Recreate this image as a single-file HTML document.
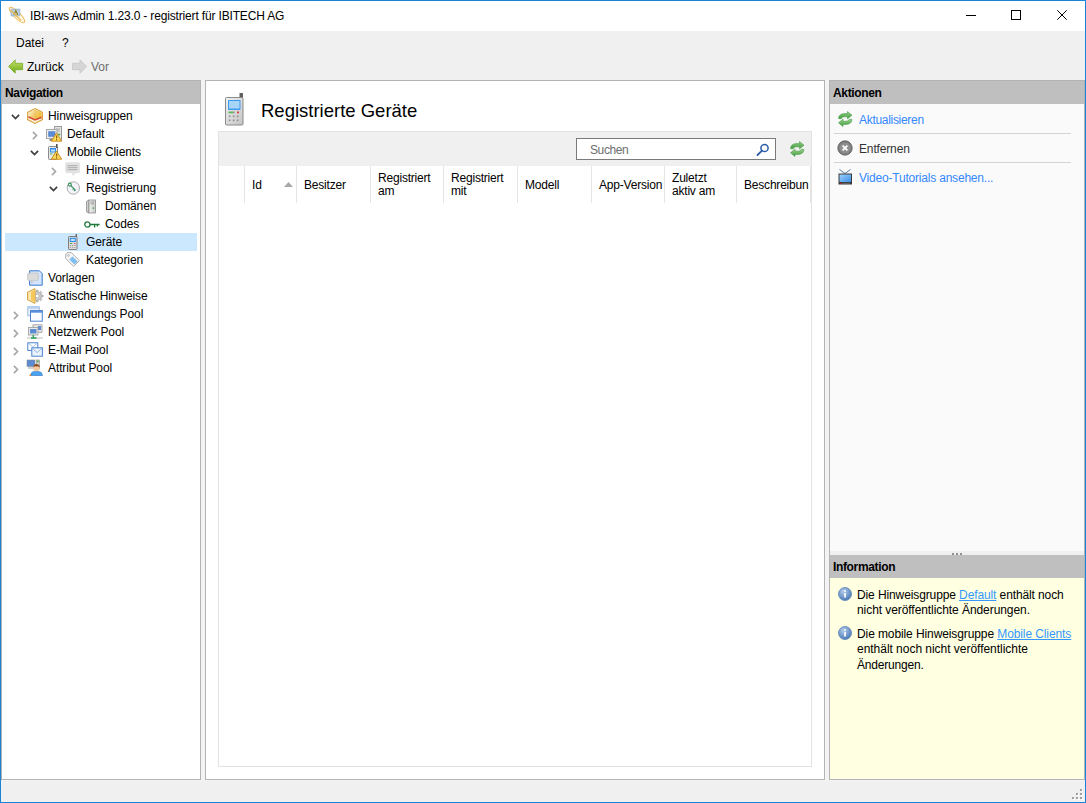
<!DOCTYPE html>
<html><head><meta charset="utf-8">
<style>
*{margin:0;padding:0;box-sizing:border-box}
html,body{width:1086px;height:803px;overflow:hidden;background:#f0f0f0;font-family:"Liberation Sans",sans-serif;font-size:12px;color:#000}
.a{position:absolute;overflow:visible}
.t{position:absolute;white-space:nowrap;line-height:14px}
.i{letter-spacing:-0.12px}
.b{font-weight:bold}
.lnk{color:#3399ff}
</style></head><body>
<div class="a" style="left:0;top:0;width:1086px;height:803px;border:1px solid #1883d7;background:#f0f0f0"></div>
<div class="a" style="left:1px;top:1px;width:1084px;height:30px;background:#fff"></div>
<div class="a" style="left:201px;top:80px;width:4px;height:701px;background:#f3f3f3"></div><div class="a" style="left:825px;top:80px;width:4px;height:701px;background:#f3f3f3"></div><div class="a" style="left:1px;top:780px;width:1084px;height:1px;background:#f4f4f4"></div>
<svg class="a" style="left:7px;top:5px" width="20" height="20" viewBox="0 0 20 20"><ellipse cx="10" cy="10" rx="10.5" ry="3.2" transform="rotate(45 10 10)" fill="#fff8e4" stroke="#efbc5c" stroke-width="1"/><rect x="4" y="4" width="9" height="7" fill="#b4cbe2" stroke="#8aa6c4" stroke-width="0.5"/><path d="M7 10 L8.8 5.5 L10.6 10" fill="none" stroke="#9a8418" stroke-width="1.2"/><path d="M3.5 5 L14 15.5" stroke="#efbc5c" stroke-width="1.2"/></svg>
<div class="t" style="left:30px;top:9px;letter-spacing:-0.16px">IBI-aws Admin 1.23.0 - registriert für IBITECH AG</div>
<div class="a" style="left:966px;top:15px;width:10px;height:1px;background:#000"></div>
<div class="a" style="left:1011px;top:10px;width:10px;height:10px;border:1px solid #000"></div>
<svg class="a" style="left:1057px;top:10px" width="10" height="10" viewBox="0 0 10 10"><path d="M0.3 0.3 L9.7 9.7 M9.7 0.3 L0.3 9.7" stroke="#000" stroke-width="1"/></svg>

<div class="t" style="left:16px;top:36px;">Datei</div>
<div class="t" style="left:62px;top:36px;">?</div>
<svg class="a" style="left:8px;top:59px" width="16" height="15" viewBox="0 0 16 15"><defs><linearGradient id="ga" x1="0" y1="0" x2="0" y2="1"><stop offset="0" stop-color="#c8e46a"/><stop offset="1" stop-color="#6aa812"/></linearGradient></defs><path d="M0.6 7.5 L7.2 0.8 L7.2 4.3 L14.6 4.3 L14.6 10.7 L7.2 10.7 L7.2 14.2 Z" fill="url(#ga)" stroke="#7aaa28" stroke-width="0.8"/></svg>
<div class="t" style="left:27px;top:60px;">Zurück</div>
<svg class="a" style="left:72px;top:59px" width="16" height="15" viewBox="0 0 16 15"><path d="M14.6 7.5 L8 0.8 L8 4.3 L0.6 4.3 L0.6 10.7 L8 10.7 L8 14.2 Z" fill="#d6d6d6" stroke="#c4c4c4" stroke-width="0.8"/></svg>
<div class="t" style="left:91px;top:60px;color:#6d6d6d">Vor</div>

<!-- NAV -->
<div class="a" style="left:1px;top:80px;width:200px;height:700px;background:#fff;border:1px solid #b3b3b3"></div>
<div class="a" style="left:1px;top:80px;width:200px;height:24px;background:#bfbfbf;border:1px solid #b3b3b3;border-bottom:none"></div>
<div class="t" style="left:5px;top:86px;font-weight:bold;letter-spacing:-0.35px">Navigation</div>
<div class="a" style="left:5px;top:233px;width:192px;height:18px;background:#cce8ff"></div>
<svg class="a" style="left:11px;top:114px" width="9" height="6" viewBox="0 0 9 6"><path d="M0.9 0.9 L4.5 4.5 L8.1 0.9" fill="none" stroke="#404040" stroke-width="1.75"/></svg>
<svg class="a" style="left:27px;top:108px" width="16" height="16" viewBox="0 0 16 16"><defs><linearGradient id="hx" x1="0" y1="0" x2="1" y2="0.6"><stop offset="0" stop-color="#fff8e0"/><stop offset="0.5" stop-color="#f5d27a"/><stop offset="1" stop-color="#f1b92a"/></linearGradient></defs><path d="M8 0.6 L15.4 4.4 L15.4 11.6 L8 15.4 L0.6 11.6 L0.6 4.4 Z" fill="#fdf6d8" stroke="#d9a03a" stroke-width="1.1"/><path d="M8 1.4 L14.6 4.8 L14.6 9 L8 11.8 L1.4 9 L1.4 4.8 Z" fill="url(#hx)"/><path d="M8 2 L8 9" stroke="#e0b050" stroke-width="0.6"/><path d="M1.4 8 L8 11 L14.6 8.4 L14.6 10.2 L8 12.8 L1.4 9.8 Z" fill="#d44a3a"/></svg>
<div class="t" style="left:48px;top:109px;letter-spacing:-0.1px">Hinweisgruppen</div>
<svg class="a" style="left:32px;top:131px" width="6" height="9" viewBox="0 0 6 9"><path d="M0.9 0.9 L4.5 4.5 L0.9 8.1" fill="none" stroke="#a6a6a6" stroke-width="1.65"/></svg>
<svg class="a" style="left:46px;top:126px" width="16" height="16" viewBox="0 0 16 16"><rect x="8.5" y="0.5" width="7" height="14" fill="#e4e4e4" stroke="#9a9a9a"/><rect x="10" y="2.5" width="4" height="1" fill="#aaa"/><rect x="10" y="4.5" width="4" height="1" fill="#aaa"/><circle cx="13.2" cy="8.6" r="1" fill="#3aa53a"/><rect x="0.5" y="3.5" width="10.5" height="9" fill="#ececec" stroke="#a8a8a8"/><rect x="2.2" y="5.2" width="7.2" height="5.6" fill="#5b8bd3"/><rect x="3.5" y="13" width="3" height="2" fill="#888"/><path d="M10.5 7 L15.6 15.2 L5.4 15.2 Z" fill="#f9dc58" stroke="#cf8a1e" stroke-width="1" stroke-linejoin="round"/><rect x="10" y="9.5" width="1.2" height="3" fill="#9a5a10"/><rect x="10" y="13.2" width="1.2" height="1.2" fill="#9a5a10"/></svg>
<div class="t" style="left:67px;top:127px;letter-spacing:-0.1px">Default</div>
<svg class="a" style="left:30px;top:150px" width="9" height="6" viewBox="0 0 9 6"><path d="M0.9 0.9 L4.5 4.5 L8.1 0.9" fill="none" stroke="#404040" stroke-width="1.75"/></svg>
<svg class="a" style="left:46px;top:144px" width="16" height="16" viewBox="0 0 16 16"><rect x="2.5" y="2.5" width="9" height="13" rx="1" fill="#e8e8e8" stroke="#8a8a8a"/><rect x="10" y="0" width="1.6" height="4" fill="#555"/><rect x="4" y="4" width="6" height="4.5" fill="#2c8ef0"/><rect x="5" y="5.5" width="4" height="2" fill="#bfe0ff"/><rect x="4" y="9.5" width="2.5" height="1" fill="#4ab54a"/><path d="M10.5 7 L15.6 15.2 L5.4 15.2 Z" fill="#f9dc58" stroke="#cf8a1e" stroke-width="1" stroke-linejoin="round"/><rect x="10" y="9.5" width="1.2" height="3" fill="#9a5a10"/><rect x="10" y="13.2" width="1.2" height="1.2" fill="#9a5a10"/></svg>
<div class="t" style="left:67px;top:145px;letter-spacing:-0.1px">Mobile Clients</div>
<svg class="a" style="left:51px;top:167px" width="6" height="9" viewBox="0 0 6 9"><path d="M0.9 0.9 L4.5 4.5 L0.9 8.1" fill="none" stroke="#a6a6a6" stroke-width="1.65"/></svg>
<svg class="a" style="left:65px;top:162px" width="16" height="16" viewBox="0 0 16 16"><path d="M0.8 1.6 Q0.8 0.8 1.6 0.8 L13.6 0.8 Q14.4 0.8 14.4 1.6 L14.4 9.8 Q14.4 10.6 13.6 10.6 L10.6 10.6 L8.2 13.4 L7.6 10.6 L1.6 10.6 Q0.8 10.6 0.8 9.8 Z" fill="#e4e4e4" stroke="#dadada" stroke-width="0.8"/><rect x="2.5" y="3.2" width="10" height="1" fill="#a8a8a8"/><rect x="2.5" y="5.2" width="10" height="1" fill="#a8a8a8"/><rect x="2.5" y="7.2" width="10" height="1" fill="#a8a8a8"/></svg>
<div class="t" style="left:86px;top:163px;letter-spacing:-0.1px">Hinweise</div>
<svg class="a" style="left:49px;top:186px" width="9" height="6" viewBox="0 0 9 6"><path d="M0.9 0.9 L4.5 4.5 L8.1 0.9" fill="none" stroke="#404040" stroke-width="1.75"/></svg>
<svg class="a" style="left:65px;top:180px" width="16" height="16" viewBox="0 0 16 16"><circle cx="8.3" cy="8" r="6.2" fill="#f4f2fa" stroke="#a4a4a4" stroke-width="0.9"/><circle cx="4.8" cy="4.6" r="1.5" fill="none" stroke="#3a9460" stroke-width="1.1"/><path d="M5.9 5.7 L10.7 10.4 M8.6 8.6 L7.6 9.6 M10 10 L9.1 11" stroke="#3a9460" stroke-width="1.2"/></svg>
<div class="t" style="left:86px;top:181px;letter-spacing:-0.1px">Registrierung</div>
<svg class="a" style="left:84px;top:198px" width="16" height="16" viewBox="0 0 16 16"><path d="M2.5 3.4 L5 2 L5 15 L2.5 13.8 Z" fill="#d0d0d0" stroke="#8c8c8c" stroke-width="0.8"/><defs><linearGradient id="sv" x1="0" y1="0" x2="1" y2="0"><stop offset="0" stop-color="#f4f4f4"/><stop offset="1" stop-color="#c8c8c8"/></linearGradient></defs><rect x="5" y="2" width="6.4" height="13" fill="url(#sv)" stroke="#8c8c8c" stroke-width="0.8"/><rect x="6.4" y="3.6" width="3.6" height="0.9" fill="#999"/><rect x="6.4" y="5.4" width="3.6" height="0.9" fill="#999"/><rect x="8.6" y="9.4" width="1.4" height="1.4" fill="#3aa53a"/></svg>
<div class="t" style="left:105px;top:199px;letter-spacing:-0.1px">Domänen</div>
<svg class="a" style="left:84px;top:216px" width="16" height="16" viewBox="0 0 16 16"><circle cx="3.4" cy="8.5" r="2.6" fill="none" stroke="#1f7a3a" stroke-width="1.3"/><path d="M6 8.5 L15.6 8.5 M10.6 8.5 L10.6 11.6 M13.4 8.5 L13.4 10.6" stroke="#1f7a3a" stroke-width="1.3"/></svg>
<div class="t" style="left:105px;top:217px;letter-spacing:-0.1px">Codes</div>
<svg class="a" style="left:65px;top:234px" width="16" height="16" viewBox="0 0 16 16"><rect x="3.5" y="2.5" width="8.5" height="13" rx="0.8" fill="#dcdcdc" stroke="#808080"/><rect x="10.6" y="0" width="1.4" height="3" fill="#666"/><rect x="4.8" y="3.8" width="6" height="4.2" fill="#2a8df0"/><rect x="5.8" y="4.8" width="4" height="2.2" fill="#bfe0ff"/><rect x="5" y="9" width="2.2" height="1" fill="#4ab54a"/><rect x="9.2" y="9" width="1.2" height="1" fill="#e04040"/><rect x="5" y="11" width="1" height="1" fill="#999"/><rect x="7.2" y="11" width="1" height="1" fill="#999"/><rect x="9.4" y="11" width="1" height="1" fill="#999"/><rect x="5" y="13" width="1" height="1" fill="#999"/><rect x="7.2" y="13" width="1" height="1" fill="#999"/><rect x="9.4" y="13" width="1" height="1" fill="#999"/></svg>
<div class="t" style="left:86px;top:235px;letter-spacing:-0.1px">Geräte</div>
<svg class="a" style="left:65px;top:252px" width="16" height="16" viewBox="0 0 16 16"><path d="M0.8 2 L2.2 0.6 L6.4 0.6 L14.4 8.6 L8.6 14.4 L0.6 6.4 Z" fill="#f4f4f4" stroke="#a8a8a8" stroke-width="0.9"/><circle cx="3.4" cy="3.4" r="0.9" fill="none" stroke="#aaa" stroke-width="0.7"/><path d="M4.4 7.6 L7.6 4.4 L12.6 9.4 L9.4 12.6 Z" fill="#7dbdf0"/></svg>
<div class="t" style="left:86px;top:253px;letter-spacing:-0.1px">Kategorien</div>
<svg class="a" style="left:27px;top:270px" width="16" height="16" viewBox="0 0 16 16"><path d="M2.6 0.8 L12.4 0.8 L15.2 3.6 L15.2 15.2 L2.6 15.2 Z" fill="#d2e5fb" stroke="#3b78d0" stroke-width="1"/><path d="M0.6 4.2 Q0.6 3.2 1.6 3.2 L10.2 3.2 Q11.2 3.2 11.2 4.2 L11.2 9.4 Q11.2 10.4 10.2 10.4 L6.2 10.4 L4.6 13.2 L4.6 10.4 L1.6 10.4 Q0.6 10.4 0.6 9.4 Z" fill="#dcdcdc" stroke="#c4c4c4" stroke-width="0.8"/></svg>
<div class="t" style="left:48px;top:271px;letter-spacing:-0.1px">Vorlagen</div>
<svg class="a" style="left:27px;top:288px" width="16" height="16" viewBox="0 0 16 16"><path d="M14.30 7.08 L15.96 7.31 L15.96 8.69 L14.30 8.92 L13.75 10.25 L14.76 11.58 L13.78 12.56 L12.45 11.55 L11.12 12.10 L10.89 13.76 L9.51 13.76 L9.28 12.10 L7.95 11.55 L6.62 12.56 L5.64 11.58 L6.65 10.25 L6.10 8.92 L4.44 8.69 L4.44 7.31 L6.10 7.08 L6.65 5.75 L5.64 4.42 L6.62 3.44 L7.95 4.45 L9.28 3.90 L9.51 2.24 L10.89 2.24 L11.12 3.90 L12.45 4.45 L13.78 3.44 L14.76 4.42 L13.75 5.75 Z" fill="#cdcdcd" stroke="#8e8e8e" stroke-width="0.7"/><circle cx="10.2" cy="8" r="1.8" fill="#fff" stroke="#9a9a9a" stroke-width="0.5"/><path d="M8 0.6 L8 15.4 L0.6 11.8 L0.6 4.2 Z" fill="#fbe6b0" stroke="#d9a03a" stroke-width="1"/><path d="M8 1.8 L8 14.2 L4 12.2 L4 3.8 Z" fill="#f3c75a"/></svg>
<div class="t" style="left:48px;top:289px;letter-spacing:-0.1px">Statische Hinweise</div>
<svg class="a" style="left:13px;top:311px" width="6" height="9" viewBox="0 0 6 9"><path d="M0.9 0.9 L4.5 4.5 L0.9 8.1" fill="none" stroke="#a6a6a6" stroke-width="1.65"/></svg>
<svg class="a" style="left:27px;top:306px" width="16" height="16" viewBox="0 0 16 16"><rect x="0.8" y="0.8" width="11.5" height="9" fill="#e8f0fa" stroke="#8fb2e0" stroke-width="0.9"/><rect x="0.8" y="0.8" width="11.5" height="2" fill="#b8d0f0"/><rect x="3.5" y="4.5" width="11.8" height="10.7" fill="#f8fbff" stroke="#4a82d0" stroke-width="1"/><rect x="3.5" y="4.5" width="11.8" height="2.2" fill="#5a90da"/></svg>
<div class="t" style="left:48px;top:307px;letter-spacing:-0.1px">Anwendungs Pool</div>
<svg class="a" style="left:13px;top:329px" width="6" height="9" viewBox="0 0 6 9"><path d="M0.9 0.9 L4.5 4.5 L0.9 8.1" fill="none" stroke="#a6a6a6" stroke-width="1.65"/></svg>
<svg class="a" style="left:27px;top:324px" width="16" height="16" viewBox="0 0 16 16"><rect x="6" y="0.8" width="9" height="7.5" fill="#e6e6e6" stroke="#9a9a9a" stroke-width="0.8"/><rect x="11" y="2" width="3" height="4" fill="#5b8bd3"/><rect x="1.5" y="3.5" width="9.5" height="7.5" fill="#eaeaea" stroke="#9a9a9a" stroke-width="0.8"/><rect x="3" y="5" width="6.5" height="4.5" fill="#5b8bd3"/><rect x="5.5" y="11" width="1.5" height="2.2" fill="#2aa45a"/><rect x="0" y="13.4" width="16" height="1.2" fill="#c8c8c8"/><rect x="4" y="13.2" width="5.5" height="1.6" fill="#2aa45a"/></svg>
<div class="t" style="left:48px;top:325px;letter-spacing:-0.1px">Netzwerk Pool</div>
<svg class="a" style="left:13px;top:347px" width="6" height="9" viewBox="0 0 6 9"><path d="M0.9 0.9 L4.5 4.5 L0.9 8.1" fill="none" stroke="#a6a6a6" stroke-width="1.65"/></svg>
<svg class="a" style="left:27px;top:342px" width="16" height="16" viewBox="0 0 16 16"><rect x="0.8" y="0.8" width="10" height="7.6" fill="#fff" stroke="#4a82d0" stroke-width="1"/><path d="M1 1 L5.8 5 L10.6 1" fill="none" stroke="#8fb2e0" stroke-width="0.8"/><rect x="4.8" y="5.8" width="10.6" height="8.4" fill="#eaf2fc" stroke="#4a82d0" stroke-width="1"/><path d="M5 6 L10.1 10.6 L15.2 6" fill="none" stroke="#8fb2e0" stroke-width="0.9"/></svg>
<div class="t" style="left:48px;top:343px;letter-spacing:-0.1px">E-Mail Pool</div>
<svg class="a" style="left:13px;top:365px" width="6" height="9" viewBox="0 0 6 9"><path d="M0.9 0.9 L4.5 4.5 L0.9 8.1" fill="none" stroke="#a6a6a6" stroke-width="1.65"/></svg>
<svg class="a" style="left:27px;top:360px" width="16" height="16" viewBox="0 0 16 16"><rect x="0" y="0" width="8" height="6.5" fill="#5b8bd3" stroke="#8a8a8a" stroke-width="0.6"/><rect x="9.5" y="0" width="3" height="9" fill="#dcdcdc" stroke="#888" stroke-width="0.6"/><rect x="1" y="7" width="6" height="2" fill="#d0d0d0"/><circle cx="10.8" cy="1.5" r="0.9" fill="#3aa53a"/><path d="M3.5 15.5 Q4 11.6 7.5 11.4 L11.5 11.4 Q15 11.6 15.5 15.5 Z" fill="#4aa3f0" stroke="#2a70c0" stroke-width="0.6"/><circle cx="9.5" cy="8" r="3.2" fill="#f5c9a0"/><path d="M6.2 7.6 Q6.5 4 9.5 4 Q12.6 4 12.8 7.6 Q11 6 9.5 6.4 Q7.6 6 6.2 7.6 Z" fill="#8a4a1e"/><rect x="2.5" y="14.6" width="1.6" height="1.4" fill="#f08020"/></svg>
<div class="t" style="left:48px;top:361px;letter-spacing:-0.1px">Attribut Pool</div>

<!-- CENTER -->
<div class="a" style="left:205px;top:80px;width:620px;height:700px;background:#fff;border:1px solid #b3b3b3"></div>
<svg class="a" style="left:225px;top:93px" width="19" height="33" viewBox="0 0 19 33"><defs><linearGradient id="pb" x1="0" y1="0" x2="1" y2="1"><stop offset="0" stop-color="#f2f2f2"/><stop offset="1" stop-color="#c4c4c4"/></linearGradient></defs><rect x="14.5" y="0" width="3.5" height="5" fill="#606060"/><rect x="0.5" y="4.5" width="17.5" height="27.5" rx="1" fill="url(#pb)" stroke="#8a8a8a" stroke-width="1"/><rect x="3" y="7" width="12.5" height="10" rx="0.8" fill="#3d9af2"/><rect x="4" y="8" width="10.5" height="7.5" fill="#a6d5f8"/><rect x="3.5" y="18.5" width="4.5" height="1.8" fill="#5cb85c"/><rect x="8" y="18.5" width="1.8" height="1.8" fill="#9a9a9a"/><rect x="12" y="18.5" width="2" height="1.8" fill="#e03c3c"/><rect x="3.8" y="22.5" width="1.6" height="1.6" fill="#8c8c8c"/><rect x="7.8" y="22.5" width="1.6" height="1.6" fill="#8c8c8c"/><rect x="11.8" y="22.5" width="1.6" height="1.6" fill="#8c8c8c"/><rect x="3.8" y="26.5" width="1.6" height="1.6" fill="#8c8c8c"/><rect x="7.8" y="26.5" width="1.6" height="1.6" fill="#8c8c8c"/><rect x="11.8" y="26.5" width="1.6" height="1.6" fill="#8c8c8c"/></svg>
<div class="t" style="left:261px;top:100px;font-size:18.5px;line-height:22px">Registrierte Geräte</div>
<div class="a" style="left:218px;top:131px;width:594px;height:636px;border:1px solid #e3e3e3;background:#fff"></div>
<div class="a" style="left:219px;top:132px;width:592px;height:34px;background:#f0f0f0"></div>
<div class="a" style="left:576px;top:138px;width:200px;height:22px;border:1px solid #7a7a7a;background:#fff"></div>
<div class="t" style="left:590px;top:143px;color:#6d6d6d;letter-spacing:-0.4px">Suchen</div>
<svg class="a" style="left:756px;top:143px" width="14" height="13" viewBox="0 0 14 13"><circle cx="8.5" cy="5" r="3.6" fill="none" stroke="#2c5ea8" stroke-width="1.5"/><path d="M6 7.6 L1.5 12" stroke="#2c5ea8" stroke-width="1.8" stroke-linecap="round"/></svg>
<svg class="a" style="left:789px;top:141px" width="16" height="16" viewBox="0 0 16 16"><defs><linearGradient id="rf" x1="0" y1="0" x2="0" y2="1"><stop offset="0" stop-color="#9ad38a"/><stop offset="1" stop-color="#3e9a3e"/></linearGradient></defs><path d="M1.5 7.5 Q2 2.8 7.2 2.6 L10.5 2.6 L10.5 0.5 L15 4.2 L10.5 7.8 L10.5 5.8 L7.2 5.8 Q4.6 5.8 4.2 7.8 Z" fill="url(#rf)" stroke="#4a9a4a" stroke-width="0.6"/><path d="M15 8.5 Q14.5 13.2 9.3 13.4 L6 13.4 L6 15.5 L1.5 11.8 L6 8.2 L6 10.2 L9.3 10.2 Q11.9 10.2 12.3 8.2 Z" fill="url(#rf)" stroke="#4a9a4a" stroke-width="0.6"/></svg>
<div class="a" style="left:244px;top:166px;width:1px;height:37px;background:#e5e5e5"></div>
<div class="a" style="left:296px;top:166px;width:1px;height:37px;background:#e5e5e5"></div>
<div class="a" style="left:370px;top:166px;width:1px;height:37px;background:#e5e5e5"></div>
<div class="a" style="left:443px;top:166px;width:1px;height:37px;background:#e5e5e5"></div>
<div class="a" style="left:517px;top:166px;width:1px;height:37px;background:#e5e5e5"></div>
<div class="a" style="left:591px;top:166px;width:1px;height:37px;background:#e5e5e5"></div>
<div class="a" style="left:664px;top:166px;width:1px;height:37px;background:#e5e5e5"></div>
<div class="a" style="left:736px;top:166px;width:1px;height:37px;background:#e5e5e5"></div>
<div class="a" style="left:810px;top:166px;width:1px;height:37px;background:#e5e5e5"></div>
<div class="t" style="left:252px;top:178px;letter-spacing:-0.2px">Id</div>
<div class="t" style="left:304px;top:178px;letter-spacing:-0.2px">Besitzer</div>
<div class="t" style="left:378px;top:172px;line-height:13px;letter-spacing:-0.2px">Registriert<br>am</div>
<div class="t" style="left:451px;top:172px;line-height:13px;letter-spacing:-0.2px">Registriert<br>mit</div>
<div class="t" style="left:525px;top:178px;letter-spacing:-0.2px">Modell</div>
<div class="t" style="left:599px;top:178px;letter-spacing:-0.2px">App-Version</div>
<div class="t" style="left:672px;top:172px;line-height:13px;letter-spacing:-0.2px">Zuletzt<br>aktiv am</div>
<div class="t" style="left:744px;top:178px;letter-spacing:-0.2px">Beschreibun</div>
<svg class="a" style="left:284px;top:182px" width="9" height="5" viewBox="0 0 9 5"><path d="M0 5 L4.5 0 L9 5 Z" fill="#a8a8a8"/></svg>

<!-- RIGHT -->
<div class="a" style="left:829px;top:80px;width:256px;height:700px;background:#fafafa;border:1px solid #b3b3b3"></div>
<div class="a" style="left:829px;top:80px;width:256px;height:24px;background:#bfbfbf;border:1px solid #b3b3b3;border-bottom:none"></div>
<div class="t" style="left:833px;top:86px;font-weight:bold;letter-spacing:-0.35px">Aktionen</div>
<svg class="a" style="left:837px;top:111px" width="16" height="16" viewBox="0 0 16 16"><defs><linearGradient id="rf" x1="0" y1="0" x2="0" y2="1"><stop offset="0" stop-color="#9ad38a"/><stop offset="1" stop-color="#3e9a3e"/></linearGradient></defs><path d="M1.5 7.5 Q2 2.8 7.2 2.6 L10.5 2.6 L10.5 0.5 L15 4.2 L10.5 7.8 L10.5 5.8 L7.2 5.8 Q4.6 5.8 4.2 7.8 Z" fill="url(#rf)" stroke="#4a9a4a" stroke-width="0.6"/><path d="M15 8.5 Q14.5 13.2 9.3 13.4 L6 13.4 L6 15.5 L1.5 11.8 L6 8.2 L6 10.2 L9.3 10.2 Q11.9 10.2 12.3 8.2 Z" fill="url(#rf)" stroke="#4a9a4a" stroke-width="0.6"/></svg>
<div class="t" style="left:859px;top:113px;color:#3388ff;letter-spacing:-0.3px">Aktualisieren</div>
<div class="a" style="left:834px;top:133px;width:237px;height:1px;background:#d4d4d4"></div>
<svg class="a" style="left:837px;top:140px" width="16" height="16" viewBox="0 0 16 16"><circle cx="8" cy="8" r="7.2" fill="#7a7a7a" stroke="#5a5a5a" stroke-width="0.8"/><circle cx="8" cy="8" r="5.6" fill="#8e8e8e"/><path d="M5.6 5.6 L10.4 10.4 M10.4 5.6 L5.6 10.4" stroke="#fff" stroke-width="1.7"/></svg>
<div class="t" style="left:859px;top:142px;color:#333;letter-spacing:-0.15px">Entfernen</div>
<div class="a" style="left:834px;top:162px;width:237px;height:1px;background:#d4d4d4"></div>
<svg class="a" style="left:837px;top:169px" width="16" height="16" viewBox="0 0 16 16"><path d="M2.5 0.5 L8 4.5 L13.5 0.5" fill="none" stroke="#4a6a9a" stroke-width="0.9"/><defs><linearGradient id="tvg" x1="0" y1="0" x2="1" y2="1"><stop offset="0" stop-color="#9fd3fb"/><stop offset="1" stop-color="#3a8ee8"/></linearGradient></defs><rect x="1.5" y="4.5" width="13.5" height="11" fill="#3a3a3a"/><rect x="2.5" y="5.5" width="11.5" height="7.5" fill="url(#tvg)"/><rect x="3" y="13.8" width="1.4" height="1" fill="#e02020"/><rect x="5.5" y="13.8" width="1" height="1" fill="#999"/><rect x="7.5" y="13.8" width="1" height="1" fill="#999"/><rect x="9.5" y="13.8" width="1" height="1" fill="#999"/><rect x="11.5" y="13.8" width="1" height="1" fill="#999"/></svg>
<div class="t" style="left:859px;top:171px;color:#3388ff;letter-spacing:-0.2px">Video-Tutorials ansehen...</div>
<div class="a" style="left:830px;top:551px;width:254px;height:4px;background:#f0f0f0"></div>
<div class="a" style="left:830px;top:555px;width:254px;height:23px;background:#bfbfbf"></div>
<div class="t" style="left:833px;top:560px;font-weight:bold;letter-spacing:-0.35px">Information</div>
<div class="a" style="left:830px;top:578px;width:254px;height:201px;background:#ffffe1"></div>
<svg class="a" style="left:838px;top:587px" width="14" height="14" viewBox="0 0 14 14"><defs><radialGradient id="ib" cx="0.4" cy="0.3" r="0.8"><stop offset="0" stop-color="#b4cdea"/><stop offset="1" stop-color="#3c6eb0"/></radialGradient></defs><circle cx="7" cy="7" r="6.5" fill="url(#ib)" stroke="#5a82b8" stroke-width="0.8"/><rect x="6.2" y="6" width="1.7" height="4.5" fill="#fff"/><rect x="6.2" y="3.2" width="1.7" height="1.6" fill="#fff"/></svg>
<div class="t" style="left:857px;top:587.5px;letter-spacing:-0.11px">Die Hinweisgruppe <u class="lnk">Default</u> enthält noch</div>
<div class="t" style="left:857px;top:602.5px;letter-spacing:-0.07px">nicht veröffentlichte Änderungen.</div>
<svg class="a" style="left:838px;top:626px" width="14" height="14" viewBox="0 0 14 14"><defs><radialGradient id="ib" cx="0.4" cy="0.3" r="0.8"><stop offset="0" stop-color="#b4cdea"/><stop offset="1" stop-color="#3c6eb0"/></radialGradient></defs><circle cx="7" cy="7" r="6.5" fill="url(#ib)" stroke="#5a82b8" stroke-width="0.8"/><rect x="6.2" y="6" width="1.7" height="4.5" fill="#fff"/><rect x="6.2" y="3.2" width="1.7" height="1.6" fill="#fff"/></svg>
<div class="t" style="left:857px;top:626.5px;letter-spacing:-0.1px">Die mobile Hinweisgruppe <u class="lnk">Mobile Clients</u></div>
<div class="t" style="left:857px;top:642px;letter-spacing:-0.03px">enthält noch nicht veröffentlichte</div>
<div class="t" style="left:857px;top:657.5px;letter-spacing:-0.2px">Änderungen.</div>
<div class="a" style="left:1081px;top:790px;width:2px;height:2px;background:#fff"></div>
<div class="a" style="left:1080px;top:789px;width:2px;height:2px;background:#a0a0a0"></div>
<div class="a" style="left:1077px;top:794px;width:2px;height:2px;background:#fff"></div>
<div class="a" style="left:1076px;top:793px;width:2px;height:2px;background:#a0a0a0"></div>
<div class="a" style="left:1081px;top:794px;width:2px;height:2px;background:#fff"></div>
<div class="a" style="left:1080px;top:793px;width:2px;height:2px;background:#a0a0a0"></div>
<div class="a" style="left:1073px;top:798px;width:2px;height:2px;background:#fff"></div>
<div class="a" style="left:1072px;top:797px;width:2px;height:2px;background:#a0a0a0"></div>
<div class="a" style="left:1077px;top:798px;width:2px;height:2px;background:#fff"></div>
<div class="a" style="left:1076px;top:797px;width:2px;height:2px;background:#a0a0a0"></div>
<div class="a" style="left:1081px;top:798px;width:2px;height:2px;background:#fff"></div>
<div class="a" style="left:1080px;top:797px;width:2px;height:2px;background:#a0a0a0"></div>
<div class="a" style="left:952px;top:553px;width:2px;height:2px;background:#909090"></div><div class="a" style="left:956px;top:553px;width:2px;height:2px;background:#909090"></div><div class="a" style="left:960px;top:553px;width:2px;height:2px;background:#909090"></div>
</body></html>
